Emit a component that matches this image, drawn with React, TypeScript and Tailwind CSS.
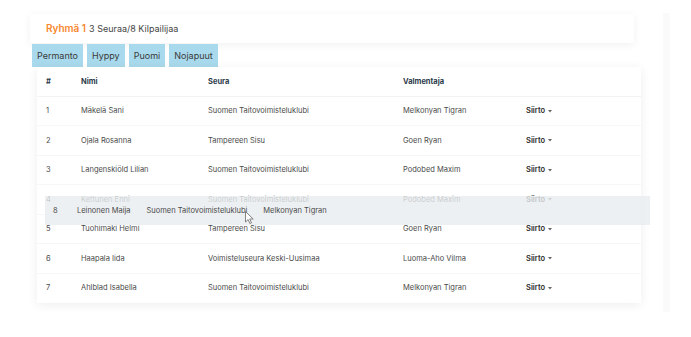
import React from "react";

const rows = [
  { n: 1, name: "Mäkelä Sani", club: "Suomen Taitovoimisteluklubi", coach: "Melkonyan Tigran" },
  { n: 2, name: "Ojala Rosanna", club: "Tampereen Sisu", coach: "Goen Ryan" },
  { n: 3, name: "Langenskiöld Lilian", club: "Suomen Taitovoimisteluklubi", coach: "Podobed Maxim" },
  { n: 4, name: "Kettunen Enni", club: "Suomen Taitovoimisteluklubi", coach: "Podobed Maxim" },
  { n: 5, name: "Tuohimäki Helmi", club: "Tampereen Sisu", coach: "Goen Ryan" },
  { n: 6, name: "Haapala Iida", club: "Voimisteluseura Keski-Uusimaa", coach: "Luoma-Aho Vilma" },
  { n: 7, name: "Ahlblad Isabella", club: "Suomen Taitovoimisteluklubi", coach: "Melkonyan Tigran" },
];

const tabs = ["Permanto", "Hyppy", "Puomi", "Nojapuut"];

const Caret = () => (
  <svg width="4" height="3" viewBox="0 0 4 3" className="ml-[3px] inline-block text-[#666]">
    <path d="M0 0h4L2 2.5z" fill="currentColor" />
  </svg>
);

export default function App() {
  return (
    <div
      className="relative w-[691px] h-[337px] bg-white overflow-hidden text-[#4a4a4a]"
      style={{ fontFamily: "Inter, 'Open Sans', sans-serif" }}
    >
      <div className="flex pl-[30px] pt-[14px]">
        <div className="flex flex-col w-[611px]">
          {/* group header */}
          <div className="w-[604px] h-[29px] bg-white shadow-[0_2px_8px_rgba(0,0,0,0.06)] flex items-center pl-[16px] text-[9px]">
            <span className="text-[#f7882f] font-semibold text-[10px]">Ryhmä 1</span>
            <span className="ml-[3px] text-[#444]">3 Seuraa/8 Kilpailijaa</span>
          </div>

          {/* apparatus tabs */}
          <div className="flex gap-[4px] ml-[2px] mt-[1px]">
            {tabs.map((t) => (
              <div
                key={t}
                className="h-[23px] px-[5px] bg-[#a9d9ec] flex items-center text-[9px] text-[#3a3a3a]"
              >
                {t}
              </div>
            ))}
          </div>

          {/* table */}
          <div className="ml-[7px] w-[604px] bg-white shadow-[0_2px_10px_rgba(0,0,0,0.07)]">
            <table className="w-full table-fixed border-collapse text-[7.5px]">
              <thead>
                <tr className="h-[29px] border-b border-[#f3f3f3] text-[#2b3a4a] font-semibold text-left">
                  <th className="w-[44px] pl-[9px]">#</th>
                  <th className="w-[127px]">Nimi</th>
                  <th className="w-[195px]">Seura</th>
                  <th className="w-[123px]">Valmentaja</th>
                  <th className="w-[115px]"></th>
                </tr>
              </thead>
              <tbody>
                {rows.map((r) => (
                  <tr
                    key={r.n}
                    className="h-[29.5px] border-b border-[#f7f7f7] last:border-b-0"
                  >
                    <td className="pl-[9px]">{r.n}</td>
                    <td>{r.name}</td>
                    <td>{r.club}</td>
                    <td>{r.coach}</td>
                    <td className="font-semibold text-[#2a2a2a]">
                      Siirto
                      <Caret />
                    </td>
                  </tr>
                ))}
              </tbody>
            </table>
          </div>
        </div>

        {/* right side strip */}
        <div className="ml-[22px] -mt-[1px] w-[7px] h-[299px] bg-[#fafafa]" />
      </div>

      {/* dragged row */}
      <div className="absolute left-[45px] top-[196px] w-[605px] h-[29px] bg-[rgba(233,236,239,0.8)] flex items-center text-[7.5px] text-[#4a4a4a]">
        <span className="pl-[8px] w-[32px]">8</span>
        <span className="pr-[16px]">Leinonen Maija</span>
        <span className="pr-[16px]">Suomen Taitovoimisteluklubi</span>
        <span>Melkonyan Tigran</span>
      </div>

      {/* pointer */}
      <svg
        className="absolute left-[245px] top-[211px]"
        width="9"
        height="13"
        viewBox="0 0 9 13"
      >
        <path
          d="M0.5 0.5v10.5l2.6-2.4 1.8 3.9 1.6-0.7-1.8-3.8h3.5z"
          fill="#fff"
          stroke="#666"
          strokeWidth="0.8"
          strokeLinejoin="round"
        />
      </svg>
    </div>
  );
}
